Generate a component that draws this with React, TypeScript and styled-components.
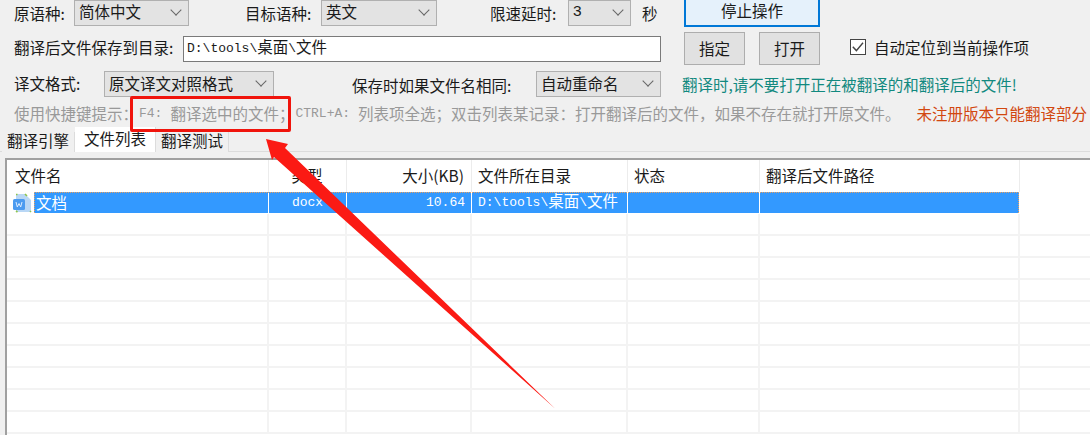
import React from 'react';
import styled, { createGlobalStyle } from 'styled-components';

const GlobalStyle = createGlobalStyle`
  html, body {
    margin: 0;
    padding: 0;
    background: #f0f0f0;
    overflow: hidden;
  }
`;

const columns = [
  { title: '文件名', width: 260 },
  { title: '类型', width: 78, center: true },
  { title: '大小(KB)', width: 125, right: true },
  { title: '文件所在目录', width: 156 },
  { title: '状态', width: 132 },
  { title: '翻译后文件路径', width: 260 },
];

const App = () => {
  return (
    <Page>
      <GlobalStyle />
      <TopRow>
        <Label $width={60}>原语种:</Label>
        <Select $width={115}>简体中文</Select>
        <Label $width={76} $left={56}>目标语种:</Label>
        <Select $width={116}>英文</Select>
        <Label $width={78} $left={53}>限速延时:</Label>
        <Select $width={63} $mono>3</Select>
        <Label $width={20} $left={11}>秒</Label>
        <StopButton>停止操作</StopButton>
      </TopRow>
      <PathRow>
        <Label $width={169} $down={-4}>翻译后文件保存到目录:</Label>
        <PathInput>
          D:\tools\<CjkText>桌面</CjkText>\<CjkText>文件</CjkText>
        </PathInput>
        <ActionButton $left={23}>指定</ActionButton>
        <ActionButton $left={14}>打开</ActionButton>
        <CheckLabel>
          <CheckBox>
            <svg width="14" height="14" viewBox="0 0 14 14">
              <path d="M1.8 6.8 L5.4 10.6 L12 2.8" fill="none" stroke="#444" strokeWidth="1.4" />
            </svg>
          </CheckBox>
          自动定位到当前操作项
        </CheckLabel>
      </PathRow>
      <FormatRow>
        <Label $width={90} $down={-2}>译文格式:</Label>
        <Select $width={170}>原文译文对照格式</Select>
        <Label $width={184} $left={78} $down={2}>保存时如果文件名相同:</Label>
        <Select $width={125}>自动重命名</Select>
        <Notice>翻译时,请不要打开正在被翻译的和翻译后的文件!</Notice>
      </FormatRow>
      <HintRow>
        <Hint>使用快捷键提示：</Hint>
        <HintMono $left={1}>F4:</HintMono>
        <Hint $left={8}>翻译选中的文件；</Hint>
        <HintMono $left={1}>CTRL+A:</HintMono>
        <Hint $left={8}>列表项全选；双击列表某记录：打开翻译后的文件，如果不存在就打开原文件。</Hint>
        <Warning>未注册版本只能翻译部分</Warning>
      </HintRow>
      <TabStrip>
        <Tab>翻译引擎</Tab>
        <Tab $active>文件列表</Tab>
        <Tab>翻译测试</Tab>
      </TabStrip>
      <ListPanel>
        <HeaderRow>
          {columns.map(col => (
            <HeaderCell key={col.title} $width={col.width} $center={col.center} $right={col.right}>
              {col.title}
            </HeaderCell>
          ))}
        </HeaderRow>
        <FileRow>
          <FileIcon>
            <svg width="20" height="20" viewBox="0 0 20 20">
              <path d="M4 1 L13 1 L19 7 L19 19 L4 19 Z" fill="#b9d7f5" />
              <path d="M4 1.5 L5.5 1.5 M13 1 L15 3 M18 18 L19 19 M4 18 L5.5 19" stroke="#8fc54a" strokeWidth="1.6" />
              <rect x="1" y="6" width="12" height="11" rx="1.5" fill="#4b9bf0" />
              <path d="M4 9 L5.3 14 L7 10.5 L8.7 14 L10 9" fill="none" stroke="#dcecff" strokeWidth="1" />
            </svg>
          </FileIcon>
          <NameCell>文档</NameCell>
          <DataCell $width={78} $align="center">docx</DataCell>
          <DataCell $width={125} $align="right">10.64</DataCell>
          <DataCell $width={156}>
            D:\tools\<CjkText>桌面</CjkText>\<CjkText>文件</CjkText>
          </DataCell>
          <DataCell $width={132} />
          <DataCell $width={260} />
          <FocusRect />
        </FileRow>
        {Array.from({ length: 10 }).map((_, i) => (
          <EmptyRow key={i}>
            <EmptyCell $width={262} />
            {columns.slice(1).map(col => (
              <EmptyCell key={col.title} $width={col.width} />
            ))}
          </EmptyRow>
        ))}
      </ListPanel>
      <RedBox />
      <Arrow width="1090" height="435" viewBox="0 0 1090 435">
        <polygon points="266,139 288,144 285,148 555.5,409 274,157 272,160" fill="#fb1a14" />
      </Arrow>
    </Page>
  );
};

export default App;

const Page = styled.div`
  position: relative;
  width: 1090px;
  height: 435px;
  overflow: hidden;
  background: #f0f0f0;
  color: #1a1a1a;
  font-family: 'Noto Sans CJK SC', 'Liberation Sans', sans-serif;
  font-size: 15.5px;
`;

const Row = styled.div`
  display: flex;
  align-items: center;
  padding-left: 14px;
`;

const TopRow = styled(Row)`
  height: 25px;
`;

const PathRow = styled(Row)`
  height: 33px;
  margin-top: 7px;
`;

const FormatRow = styled(Row)`
  height: 26px;
  margin-top: 6px;
`;

const HintRow = styled(Row)`
  height: 20px;
  margin-top: 6px;
  color: #999;
  white-space: nowrap;
`;

const Label = styled.div<{ $width: number; $left?: number; $down?: number }>`
  width: ${({ $width }) => $width}px;
  margin-left: ${({ $left }) => $left || 0}px;
  margin-top: ${({ $down }) => $down || 0}px;
  flex: none;
  white-space: nowrap;
`;

const Select = styled.div<{ $width: number; $mono?: boolean }>`
  display: flex;
  align-items: center;
  flex: none;
  box-sizing: border-box;
  width: ${({ $width }) => $width}px;
  height: 26px;
  padding: 0 0 3px 4px;
  border: 1px solid #b0b0b0;
  background: #e3e3e3;
  white-space: nowrap;
  position: relative;
  font-family: ${({ $mono }) => ($mono ? "'Liberation Sans', sans-serif" : 'inherit')};

  &::after {
    content: '';
    position: absolute;
    right: 8px;
    top: 5px;
    width: 7px;
    height: 7px;
    border-right: 1.3px solid #666;
    border-bottom: 1.3px solid #666;
    transform: rotate(45deg);
  }
`;

const StopButton = styled.div`
  flex: none;
  align-self: flex-end;
  box-sizing: border-box;
  width: 136px;
  height: 32px;
  margin-left: 22px;
  margin-bottom: -2px;
  padding-bottom: 2px;
  display: flex;
  align-items: center;
  justify-content: center;
  background: #e5f1fb;
  border: 2px solid #0078d7;
`;

const PathInput = styled.div`
  flex: none;
  box-sizing: border-box;
  width: 478px;
  height: 26px;
  padding-left: 3px;
  background: #fff;
  border: 1px solid #7a7a7a;
  font-family: 'Liberation Mono', 'Noto Sans CJK SC', monospace;
  font-size: 13px;
  line-height: 24px;
  white-space: pre;
`;

const ActionButton = styled.div<{ $left: number }>`
  flex: none;
  box-sizing: border-box;
  width: 61px;
  height: 33px;
  margin-left: ${({ $left }) => $left}px;
  padding-bottom: 2px;
  display: flex;
  align-items: center;
  justify-content: center;
  background: #e1e1e1;
  border: 1px solid #adadad;
`;

const CheckLabel = styled.div`
  display: flex;
  align-items: center;
  margin-left: 30px;
  margin-top: -3px;
  gap: 8px;
  white-space: nowrap;
`;

const CheckBox = styled.div`
  box-sizing: border-box;
  width: 16px;
  height: 16px;
  display: flex;
  align-items: center;
  justify-content: center;
  background: #fff;
  border: 1px solid #444;
`;

const Notice = styled.div`
  margin-left: 21px;
  color: #12897f;
  white-space: nowrap;
`;

const Hint = styled.span<{ $left?: number }>`
  margin-left: ${({ $left }) => $left || 0}px;
`;

const HintMono = styled.span<{ $left?: number }>`
  margin-left: ${({ $left }) => $left || 0}px;
  font-family: 'Liberation Mono', monospace;
  font-size: 13px;
`;

const Warning = styled.span`
  margin-left: 16px;
  color: #d2470f;
`;

const TabStrip = styled.div`
  display: flex;
  align-items: flex-end;
  height: 27px;
  margin-top: 2px;
  padding-left: 2px;
  border-bottom: 1px solid #dcdcdc;
  box-sizing: border-box;
`;

const Tab = styled.div<{ $active?: boolean }>`
  box-sizing: border-box;
  display: flex;
  align-items: center;
  justify-content: center;
  height: ${({ $active }) => ($active ? 25 : 20)}px;
  width: ${({ $active }) => ($active ? 81 : 73)}px;
  padding-bottom: ${({ $active }) => ($active ? 3 : 4)}px;
  background: ${({ $active }) => ($active ? '#fff' : '#f0f0f0')};
  border-right: 1px solid #dcdcdc;
  position: relative;
  top: 1px;
`;

const ListPanel = styled.div`
  margin: 6px 0 0 5px;
  height: 290px;
  border-top: 2px solid #a0a0a0;
  border-left: 2px solid #a0a0a0;
  background: #fff;
  overflow: hidden;
`;

const HeaderRow = styled.div`
  display: flex;
  height: 32px;
  padding-left: 2px;
`;

const HeaderCell = styled.div<{ $width: number; $center?: boolean; $right?: boolean }>`
  box-sizing: border-box;
  flex: none;
  width: ${({ $width }) => $width}px;
  height: 32px;
  padding: 0 7px 2px 6px;
  display: flex;
  align-items: center;
  justify-content: ${({ $center, $right }) => ($center ? 'center' : $right ? 'flex-end' : 'flex-start')};
  border-right: 1px solid #ececec;
  white-space: nowrap;
`;

const FileRow = styled.div`
  display: flex;
  height: 22px;
  color: #fff;
  position: relative;
`;

const FileIcon = styled.div`
  flex: none;
  width: 27px;
  height: 21px;
  padding-left: 5px;
  box-sizing: border-box;
  display: flex;
  align-items: center;
`;

const NameCell = styled.div`
  flex: none;
  box-sizing: border-box;
  width: 235px;
  height: 21px;
  padding-left: 2px;
  background: #3399ff;
  border-right: 1px solid #fff;
  line-height: 20px;
`;

const DataCell = styled.div<{ $width: number; $align?: string }>`
  box-sizing: border-box;
  flex: none;
  width: ${({ $width }) => $width}px;
  height: 21px;
  padding: 0 6px;
  background: #3399ff;
  border-right: 1px solid #fff;
  text-align: ${({ $align }) => $align || 'left'};
  font-family: 'Liberation Mono', 'Noto Sans CJK SC', monospace;
  font-size: 13px;
  line-height: 21px;
  white-space: pre;
`;

const FocusRect = styled.div`
  position: absolute;
  left: 27px;
  top: 0;
  width: 985px;
  height: 21px;
  box-sizing: border-box;
  border: 1px dotted #e8a060;
  border-bottom: none;
`;

const CjkText = styled.span`
  font-family: 'Noto Sans CJK SC', sans-serif;
  font-size: 15.5px;
  line-height: 1;
  vertical-align: -1px;
`;

const EmptyRow = styled.div`
  display: flex;
  height: 22px;
  box-sizing: border-box;
  border-bottom: 2px solid #f3f3f3;
`;

const EmptyCell = styled.div<{ $width: number }>`
  box-sizing: border-box;
  flex: none;
  width: ${({ $width }) => $width}px;
  border-right: 2px solid #f3f3f3;
`;

const RedBox = styled.div`
  position: absolute;
  left: 130px;
  top: 96px;
  width: 161px;
  height: 36px;
  box-sizing: border-box;
  border: 3px solid #f0140c;
  border-radius: 2px;
`;

const Arrow = styled.svg`
  position: absolute;
  left: 0;
  top: 0;
  pointer-events: none;
`;
